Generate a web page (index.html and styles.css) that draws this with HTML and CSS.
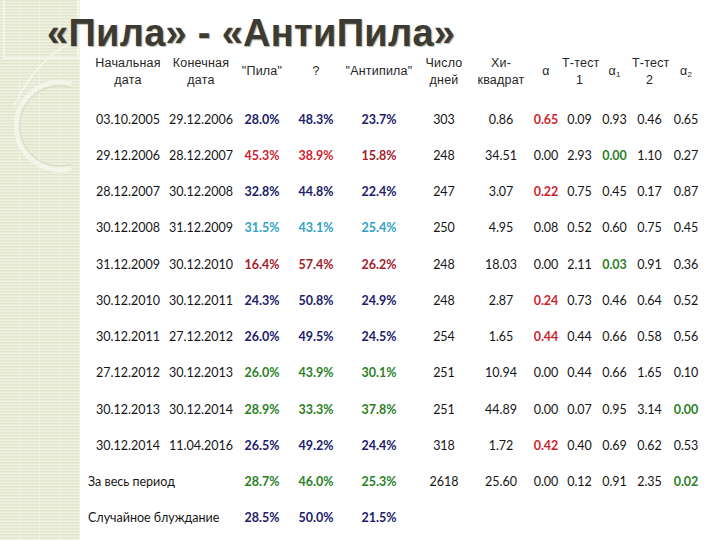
FILE: index.html
```html
<!DOCTYPE html>
<html lang="ru">
<head>
<meta charset="utf-8">
<title>«Пила» - «АнтиПила»</title>
<link rel="stylesheet" href="styles.css">
</head>
<body>
<div class="slide">
  <svg class="deco" width="80" height="540" viewBox="0 0 80 540" aria-hidden="true">
    <path d="M4 -2 V58 H78 V-2" fill="none" stroke="#f6f7ee" stroke-width="1.5"/>
    <path d="M88 36 Q40 50 14 106" fill="none" stroke="#f6f7ee" stroke-width="1.5"/>
    <path d="M71.4 83.5 A44 44 0 1 0 71.4 168.5" fill="none" stroke="#f4f5ea" stroke-width="4.5"/>
    <path d="M70.6 87.5 A40 40 0 1 0 70.6 164.5" fill="none" stroke="#d5d9c0" stroke-width="1"/>
  </svg>
  <h1 class="title">«Пила» - «АнтиПила»</h1>
  <div class="table">
    <div class="row head">
      <div>Начальная<br>дата</div>
      <div>Конечная<br>дата</div>
      <div>"Пила"</div>
      <div>?</div>
      <div>"Антипила"</div>
      <div>Число<br>дней</div>
      <div>Хи-<br>квадрат</div>
      <div>α</div>
      <div>Т-тест<br>1</div>
      <div>α<sub>1</sub></div>
      <div>Т-тест<br>2</div>
      <div>α<sub>2</sub></div>
    </div>

    <div class="row">
      <span>03.10.2005</span><span>29.12.2006</span>
      <span class="p navy">28.0%</span><span class="p navy">48.3%</span><span class="p navy">23.7%</span>
      <span>303</span><span>0.86</span>
      <span class="b red">0.65</span><span>0.09</span><span>0.93</span><span>0.46</span><span>0.65</span>
    </div>
    <div class="row">
      <span>29.12.2006</span><span>28.12.2007</span>
      <span class="p red">45.3%</span><span class="p red">38.9%</span><span class="p dred">15.8%</span>
      <span>248</span><span>34.51</span>
      <span>0.00</span><span>2.93</span><span class="b green">0.00</span><span>1.10</span><span>0.27</span>
    </div>
    <div class="row">
      <span>28.12.2007</span><span>30.12.2008</span>
      <span class="p navy">32.8%</span><span class="p navy">44.8%</span><span class="p navy">22.4%</span>
      <span>247</span><span>3.07</span>
      <span class="b red">0.22</span><span>0.75</span><span>0.45</span><span>0.17</span><span>0.87</span>
    </div>
    <div class="row">
      <span>30.12.2008</span><span>31.12.2009</span>
      <span class="p cyan">31.5%</span><span class="p cyan">43.1%</span><span class="p cyan">25.4%</span>
      <span>250</span><span>4.95</span>
      <span>0.08</span><span>0.52</span><span>0.60</span><span>0.75</span><span>0.45</span>
    </div>
    <div class="row">
      <span>31.12.2009</span><span>30.12.2010</span>
      <span class="p dred">16.4%</span><span class="p dred">57.4%</span><span class="p dred">26.2%</span>
      <span>248</span><span>18.03</span>
      <span>0.00</span><span>2.11</span><span class="b green">0.03</span><span>0.91</span><span>0.36</span>
    </div>
    <div class="row">
      <span>30.12.2010</span><span>30.12.2011</span>
      <span class="p navy">24.3%</span><span class="p navy">50.8%</span><span class="p navy">24.9%</span>
      <span>248</span><span>2.87</span>
      <span class="b red">0.24</span><span>0.73</span><span>0.46</span><span>0.64</span><span>0.52</span>
    </div>
    <div class="row">
      <span>30.12.2011</span><span>27.12.2012</span>
      <span class="p navy">26.0%</span><span class="p navy">49.5%</span><span class="p navy">24.5%</span>
      <span>254</span><span>1.65</span>
      <span class="b red">0.44</span><span>0.44</span><span>0.66</span><span>0.58</span><span>0.56</span>
    </div>
    <div class="row">
      <span>27.12.2012</span><span>30.12.2013</span>
      <span class="p green">26.0%</span><span class="p green">43.9%</span><span class="p green">30.1%</span>
      <span>251</span><span>10.94</span>
      <span>0.00</span><span>0.44</span><span>0.66</span><span>1.65</span><span>0.10</span>
    </div>
    <div class="row">
      <span>30.12.2013</span><span>30.12.2014</span>
      <span class="p green">28.9%</span><span class="p green">33.3%</span><span class="p green">37.8%</span>
      <span>251</span><span>44.89</span>
      <span>0.00</span><span>0.07</span><span>0.95</span><span>3.14</span><span class="b green">0.00</span>
    </div>
    <div class="row">
      <span>30.12.2014</span><span>11.04.2016</span>
      <span class="p navy">26.5%</span><span class="p navy">49.2%</span><span class="p navy">24.4%</span>
      <span>318</span><span>1.72</span>
      <span class="b red">0.42</span><span>0.40</span><span>0.69</span><span>0.62</span><span>0.53</span>
    </div>
    <div class="row">
      <span class="label">За весь период</span>
      <span class="p green">28.7%</span><span class="p green">46.0%</span><span class="p green">25.3%</span>
      <span>2618</span><span>25.60</span>
      <span>0.00</span><span>0.12</span><span>0.91</span><span>2.35</span><span class="b green">0.02</span>
    </div>
    <div class="row">
      <span class="label">Случайное блуждание</span>
      <span class="p navy">28.5%</span><span class="p navy">50.0%</span><span class="p navy">21.5%</span>
    </div>
  </div>
</div>
</body>
</html>
```

FILE: styles.css
```css
html, body {
  margin: 0;
  padding: 0;
}

body {
  width: 720px;
  height: 540px;
  overflow: hidden;
  background: #ffffff;
}

.slide {
  position: relative;
  width: 720px;
  height: 540px;
  background:
    repeating-linear-gradient(90deg, rgba(255,255,255,0) 0 19px, rgba(255,255,255,0.35) 19px 20px),
    repeating-linear-gradient(180deg, #e2e5cb 0 1px, #eaecd9 1px 2px, #eef0e0 2px 3px);
  background-size: 80px 100%, 80px 100%;
  background-repeat: no-repeat;
}

.deco {
  position: absolute;
  left: 0;
  top: 0;
}

.title {
  position: relative;
  margin: 0;
  padding: 13px 0 0 47px;
  font-family: "Liberation Sans", Arial, sans-serif;
  font-weight: bold;
  font-size: 38px;
  line-height: 40px;
  color: #3b3b33;
  text-shadow: 1px 1px 1px #b5b5aa;
  letter-spacing: 0.3px;
}

.table {
  position: relative;
  margin-top: 1px;
  padding-left: 88px;
}

.row {
  display: grid;
  grid-template-columns: 80px 66px 56px 52px 74px 56px 58px 32px 35px 35px 35px 38px;
  align-items: center;
  height: 36.25px;
  font-family: Lato, "Open Sans", sans-serif;
  font-size: 12.5px;
  color: #151515;
  text-align: center;
  white-space: nowrap;
}

.row.head {
  height: 35px;
  margin-bottom: 12px;
  font-family: "Liberation Sans", Arial, sans-serif;
  font-size: 12.5px;
  line-height: 17px;
  color: #262626;
  letter-spacing: 0.2px;
}

.row.head sub {
  font-size: 8px;
  vertical-align: -2px;
  line-height: 0;
}

.label {
  grid-column: span 2;
  text-align: left;
}

.p, .b {
  font-weight: bold;
}

.navy { color: #20206a; }
.red { color: #cc1f2e; }
.dred { color: #a3202a; }
.cyan { color: #2fa3c6; }
.green { color: #2b7f26; }
```
